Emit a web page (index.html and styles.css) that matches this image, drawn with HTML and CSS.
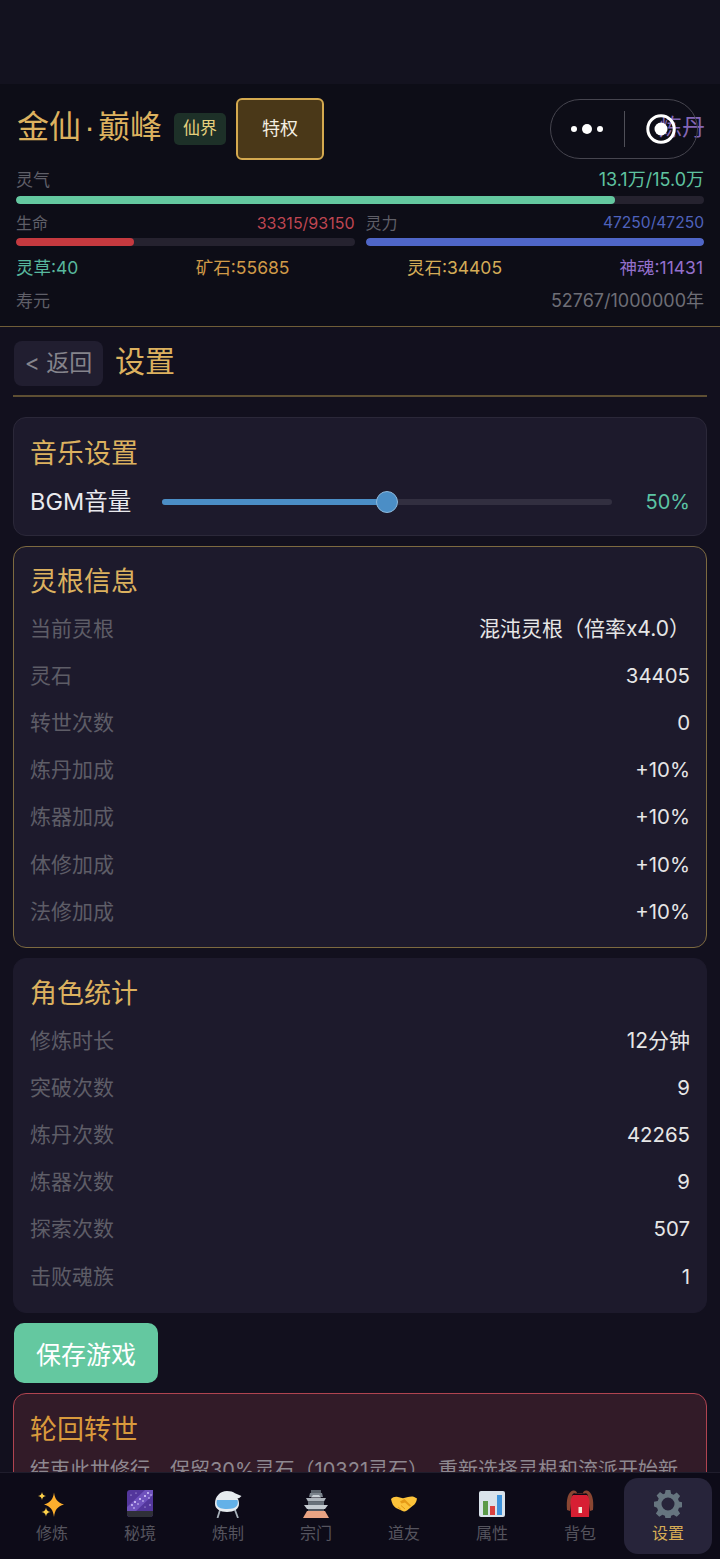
FILE: index.html
```html
<!DOCTYPE html>
<html lang="zh">
<head>
<meta charset="utf-8">
<title>设置</title>
<link rel="stylesheet" href="styles.css">
</head>
<body>
<div class="app">
  <div class="statusbar"></div>
  <header class="hud">
    <div class="hud-title">
      <span class="realm">金仙<span class="realm-dot">·</span>巅峰</span>
      <span class="realm-tag">仙界</span>
      <span class="priv">特权</span>
      <span class="alchemy">炼丹</span>
    </div>
    <div class="capsule">
      <svg class="cap-dots" viewBox="0 0 32 12" width="32" height="12"><circle cx="3" cy="6" r="3" fill="#fff"/><circle cx="16" cy="6" r="5" fill="#fff"/><circle cx="29" cy="6" r="3" fill="#fff"/></svg>
      <span class="cap-sep"></span>
      <svg class="cap-target" viewBox="0 0 30 30" width="30" height="30"><circle cx="15" cy="15" r="13.2" fill="none" stroke="#fff" stroke-width="3"/><circle cx="15" cy="15" r="6.5" fill="#fff"/></svg>
    </div>
    <div class="meter-row lh-qi"><span class="lab">灵气</span><span class="c-green">13.1万/15.0万</span></div>
    <div class="bar bar-qi"><i class="fill f-green w-qi"></i></div>
    <div class="duo">
      <div class="duo-col">
        <div class="meter-row small"><span class="lab">生命</span><span class="c-red">33315/93150</span></div>
        <div class="bar"><i class="fill f-red w-hp"></i></div>
      </div>
      <div class="duo-col">
        <div class="meter-row small"><span class="lab">灵力</span><span class="c-blue">47250/47250</span></div>
        <div class="bar"><i class="fill f-blue w-mp"></i></div>
      </div>
    </div>
    <div class="res">
      <span class="c-green2">灵草:40</span>
      <span class="c-orange">矿石:55685</span>
      <span class="c-gold">灵石:34405</span>
      <span class="c-purple">神魂:11431</span>
    </div>
    <div class="life"><span class="lab">寿元</span><span class="life-v">52767/1000000年</span></div>
  </header>

  <main class="content">
    <div class="page-head">
      <span class="back">&lt; 返回</span>
      <h1 class="page-title">设置</h1>
    </div>

    <section class="card card-music">
      <h2 class="card-title">音乐设置</h2>
      <div class="bgm">
        <span class="bgm-label">BGM音量</span>
        <div class="slider"><i class="slider-fill"></i><i class="slider-thumb"></i></div>
        <span class="bgm-val">50%</span>
      </div>
    </section>

    <section class="card card-root">
      <h2 class="card-title">灵根信息</h2>
      <dl class="rows">
        <div class="row"><dt>当前灵根</dt><dd>混沌灵根（倍率x4.0）</dd></div>
        <div class="row"><dt>灵石</dt><dd class="num">34405</dd></div>
        <div class="row"><dt>转世次数</dt><dd class="num">0</dd></div>
        <div class="row"><dt>炼丹加成</dt><dd class="num">+10%</dd></div>
        <div class="row"><dt>炼器加成</dt><dd class="num">+10%</dd></div>
        <div class="row"><dt>体修加成</dt><dd class="num">+10%</dd></div>
        <div class="row"><dt>法修加成</dt><dd class="num">+10%</dd></div>
      </dl>
    </section>

    <section class="card card-stats">
      <h2 class="card-title">角色统计</h2>
      <dl class="rows">
        <div class="row"><dt>修炼时长</dt><dd>12分钟</dd></div>
        <div class="row"><dt>突破次数</dt><dd class="num">9</dd></div>
        <div class="row"><dt>炼丹次数</dt><dd class="num">42265</dd></div>
        <div class="row"><dt>炼器次数</dt><dd class="num">9</dd></div>
        <div class="row"><dt>探索次数</dt><dd class="num">507</dd></div>
        <div class="row"><dt>击败魂族</dt><dd class="num">1</dd></div>
      </dl>
    </section>

    <button class="save">保存游戏</button>

    <section class="card card-rebirth">
      <h2 class="card-title rebirth-title">轮回转世</h2>
      <p class="rebirth-text">结束此世修行，保留30%灵石（10321灵石），重新选择灵根和流派开始新</p>
    </section>
  </main>

  <nav class="tabs">
    <div class="tab">
      <svg class="ico" viewBox="0 0 28 28"><path d="M16 2.500c1 6.800 3.400 10 10 12-6.600 2-9 5.200-10 12.500-1-7.300-3.400-10.500-10-12.500 6.600-2 9-5.200 10-12z" fill="#fdae2d"/><path d="M4 2c.4 2.500 1.300 3.500 4 4-2.700.5-3.600 1.500-4 4-.4-2.500-1.300-3.500-4-4 2.700-.5 3.600-1.500 4-4zM8 17.500c.4 2.700 1.500 3.900 4.500 4.500-3 .6-4.100 1.800-4.500 4.500-.4-2.700-1.500-3.900-4.500-4.500 3-.6 4.100-1.800 4.500-4.500z" fill="#fcd04a"/></svg>
      <span>修炼</span>
    </div>
    <div class="tab">
      <svg class="ico" viewBox="0 0 28 28"><rect x="1" y="0" width="26" height="27" rx="3" fill="#53369c"/><path d="M1 17 L19 0h8v5L9 22H1z" fill="#6f52bd"/><path d="M1 21h26v3a3 3 0 0 1-3 3H4a3 3 0 0 1-3-3z" fill="#2f3038"/><g fill="#dcd2ff"><circle cx="6" cy="15" r=".9"/><circle cx="9" cy="12" r="1"/><circle cx="12" cy="14" r=".8"/><circle cx="14" cy="9" r="1"/><circle cx="17" cy="11" r=".8"/><circle cx="19" cy="6" r="1"/><circle cx="22" cy="3" r=".9"/><circle cx="23" cy="8" r=".8"/><circle cx="25" cy="5" r=".7"/><circle cx="5" cy="5" r=".6"/><circle cx="10" cy="3" r=".6"/><circle cx="24" cy="15" r=".7"/><circle cx="19" cy="17" r=".6"/><circle cx="8" cy="18" r=".8"/></g></svg>
      <span>秘境</span>
    </div>
    <div class="tab">
      <svg class="ico" viewBox="0 0 28 28"><path d="M6 20 3.500 28M21 20l3 8" stroke="#a7b1ba" stroke-width="1.800" fill="none"/><path d="M13 1c3.500 0 6 .7 8 2.300L27.500 6l-2.500 2.200-1.500-.2c1.200 2 1.500 4 1.500 6 0 5-5 8-12 8S1 19 1 13.500C1 6.500 6 1 13 1z" fill="#e6ebef"/><path d="M3 10h20.500c1 4 .5 9-10.500 9S2 14 3 10z" fill="#63b1e8"/></svg>
      <span>炼制</span>
    </div>
    <div class="tab">
      <svg class="ico" viewBox="0 0 28 28"><path d="M9 0h10v3H9z" fill="#5b636c"/><path d="M8 3h12l1 4H7z" fill="#7c858e"/><path d="M11 5h6l2 2.500H9z" fill="#c9d0d6"/><path d="M4 8h20l-2 3.500H6z" fill="#aeb5bc"/><path d="M6 11.500h16V15H6z" fill="#69727b"/><path d="M2 15h24l-3 4H5z" fill="#c6ccd2"/><path d="M5 21h18l4 7H1z" fill="#e8a383"/><path d="M6 19h16v2H6z" fill="#505760"/></svg>
      <span>宗门</span>
    </div>
    <div class="tab">
      <svg class="ico" viewBox="0 0 28 28"><path d="M1 9c2-2 4-2.500 7-2l5 1.200L18 7c3-1 6-1 9 1.500-.5 3.500-2 6-4.500 7.500l-5.500 4.500c-2 1.300-3.500 1.300-5 .3L6 18C3.500 16.500 1.800 13.500 1 9z" fill="#fcc33a"/><path d="M10 11.500l4.500-2.500 6.500 6.500-1.500 1-4.500-4-3.500 1z" fill="#e59a17"/><path d="M8 17l3 2.500M11 15.500l4 3.500" stroke="#e59a17" stroke-width="1" fill="none"/></svg>
      <span>道友</span>
    </div>
    <div class="tab">
      <svg class="ico" viewBox="0 0 28 28"><rect x="1" y="1" width="26" height="26" rx="2" fill="#d9e3eb"/><rect x="5" y="11" width="5" height="14" fill="#5b9a4a"/><rect x="12" y="16" width="5" height="9" fill="#d9423f"/><rect x="19" y="5" width="5" height="20" fill="#3f94dc"/></svg>
      <span>属性</span>
    </div>
    <div class="tab">
      <svg class="ico bag" viewBox="0 0 28 28"><path d="M1 20C0 9 2 2 7 .5 9.500 0 11 2 11.500 4h5C17 2 18.500 0 21 .5 26 2 28 9 27 20l-3 1-2-15c-.5-2-1.500-3-3-2.500H9C7.500 3 6.500 4 6 6L4 21z" fill="#8a4632"/><path d="M7 5h14c2 2 2.500 4.500 2.500 7.500L23 27H5L4.500 12.500C4.500 9.500 5 7 7 5z" fill="#d71f33"/><rect x="12.500" y="17" width="3.500" height="6" fill="#f5e8d8"/></svg>
      <span>背包</span>
    </div>
    <div class="tab tab-on">
      <svg class="ico gear" viewBox="0 0 28 28"><path fill="#66757f" fill-rule="evenodd" d="M11.600 0h4.800l.7 3.700 2.500 1 3.100-2.100 3.400 3.400-2.100 3.100 1 2.500 3.700.7v4.800l-3.700.7-1 2.500 2.100 3.100-3.400 3.400-3.100-2.100-2.500 1-.7 3.700h-4.800l-.7-3.700-2.500-1-3.100 2.100-3.400-3.400 2.100-3.100-1-2.500L0 16.600v-4.800l3.700-.7 1-2.500L2.600 5.500 6 2.100l3.100 2.100 1.800-.7zM14 7.500a6.500 6.500 0 1 0 0 13 6.500 6.500 0 0 0 0-13z"/></svg>
      <span>设置</span>
    </div>
  </nav>
</div>
</body>
</html>
```
FILE: styles.css
```css
* { box-sizing: border-box; }
html, body { margin: 0; padding: 0; }
body {
  width: 720px; height: 1559px; overflow: hidden;
  background: #12101e;
  font-family: "Inter", "Noto Sans CJK SC", "Noto Sans", sans-serif;
  font-weight: 400;
  color: #e8e8ee;
}
.app { position: relative; width: 720px; height: 1559px; overflow: hidden; display: flex; flex-direction: column; }
.statusbar { height: 84px; background: #13121f; flex: none; }

.hud { position: relative; flex: none; height: 243px; padding: 14px 16px 0 16px; background: #0d0d17; border-bottom: 1px solid #6f5d38; }
.hud-title { display: flex; align-items: center; height: 62px; }
.realm { font-size: 32px; line-height: 1; color: #dcb15f; margin-left: 1px; margin-bottom: 4px; display: flex; align-items: center; }
.realm-dot { font-family: "Liberation Sans", sans-serif; width: 17px; text-align: center; flex: none; }
.realm-tag { margin-left: 12px; width: 52px; height: 32px; line-height: 30px; text-align: center; font-size: 17px; color: #e4cf7c; background: #1d3028; border-radius: 5px; }
.priv { margin-left: 10px; width: 88px; height: 62px; line-height: 58px; text-align: center; font-size: 18px; color: #f4efe2; background: #4a3818; border: 2px solid #d4a94f; border-radius: 6px; }
.alchemy { position: absolute; right: 15px; top: 28px; font-size: 23px; line-height: 30px; color: #8366b6; }

.capsule { position: absolute; left: 550px; top: 15px; width: 148px; height: 60px; border: 1.500px solid #46454f; border-radius: 30px; display: flex; align-items: center; }
.cap-dots { margin-left: 20px; flex: none; }
.cap-sep { margin-left: 21px; width: 1px; height: 36px; background: #4f4f58; flex: none; }
.cap-target { position: absolute; left: 95px; top: 14px; }

.meter-row { display: flex; justify-content: space-between; align-items: center; font-size: 18px; line-height: 24px; }
.lh-qi { margin-top: 8px; height: 24px; }
.lab { color: #5f5f68; font-size: 17px; }
.small .lab { font-size: 16px; }
.bar { height: 8px; border-radius: 4px; background: #25222f; overflow: hidden; }
.bar-qi { margin-top: 4px; }
.fill { display: block; height: 100%; border-radius: 4px; }
.f-green { background: #64c8a0; }
.f-red { background: #c5393f; }
.f-blue { background: #4f66c8; }
.w-qi { width: 87%; }
.w-hp { width: 35%; }
.w-mp { width: 100%; }
.c-green { color: #5fc3a0; }
.c-red { color: #bf4652; font-size: 16px; }
.c-blue { color: #4f62bc; font-size: 15.600px; }
.duo { display: flex; gap: 11px; margin-top: 7px; }
.duo-col { flex: 1 1 0; }
.small { height: 24px; }
.small + .bar { margin-top: 3px; }

.res { display: flex; justify-content: space-between; margin-top: 9px; font-size: 17.500px; line-height: 26px; padding-right: 1px; }
.c-green2 { color: #58b89e; }
.c-orange { color: #d09a48; }
.c-gold { color: #d4ac57; }
.c-purple { color: #9470cc; }
.life { display: flex; justify-content: space-between; align-items: center; margin-top: 7px; line-height: 26px; }
.life-v { color: #6e6e76; font-size: 18px; }

.content { flex: 1 1 auto; overflow: hidden; padding: 14px 13px 0 13px; min-height: 0; }
.page-head { display: flex; align-items: center; height: 56px; padding-bottom: 10px; border-bottom: 2px solid #5e4f33; }
.back { display: block; margin-left: 1px; width: 89px; height: 45px; line-height: 44px; text-align: center; background: #211e30; border-radius: 8px; font-size: 23px; color: #85848c; white-space: nowrap; }
.page-title { margin: 0 0 4px 12px; font-size: 30px; font-weight: 400; color: #dcb15f; line-height: 40px; }

.card { background: #1d1a2c; border-radius: 13px; border: 1px solid #2b2839; padding: 0 16px; }
.card-title { margin: 0; font-size: 27px; line-height: 36px; font-weight: 400; color: #dcb15f; }
.card-music { margin-top: 20px; height: 119px; padding-top: 18px; }
.bgm { display: flex; align-items: center; margin-top: 15px; height: 30px; }
.bgm-label { font-size: 23.500px; color: #e9e9ee; width: 132px; flex: none; white-space: nowrap; line-height: 30px; }
.slider { position: relative; width: 450px; height: 6px; background: #322f40; border-radius: 3px; flex: none; }
.slider-fill { display: block; width: 50%; height: 100%; background: #4b8ec6; border-radius: 3px; }
.slider-thumb { position: absolute; left: 214px; top: -8px; width: 22px; height: 22px; border-radius: 50%; background: #4b8ec6; border: 1px solid #8db9dc; }
.bgm-val { margin-left: auto; font-size: 20px; color: #5cc4a4; line-height: 30px; }

.card-root { margin-top: 10px; height: 402px; padding-top: 17px; border-color: #7d6a40; }
.card-stats { margin-top: 10px; height: 355px; padding-top: 17px; border-color: #1d1a2c; }
.rows { margin: 4.700px 0 0; }
.row { display: flex; justify-content: space-between; height: 47.200px; line-height: 47.200px; }
.row dt { font-size: 21px; color: #5e5d67; }
.row dd { margin: 0; font-size: 21px; color: #e6e6e6; }
.row dd.num { font-size: 20.400px; }

.save { display: block; margin-top: 10px; margin-left: 1px; width: 144px; height: 60px; border: 0; border-radius: 10px; background: #64c8a0; color: #fff; font-family: inherit; font-size: 25px; font-weight: 400; padding: 0; }

.card-rebirth { margin-top: 10px; height: 200px; padding-top: 18px; background: #321b28; border: 1.500px solid #b04450; }
.rebirth-title { color: #d99a3c; }
.rebirth-text { margin: 7px 0 0; font-size: 20px; line-height: 30px; color: #8e8890; white-space: nowrap; }

.tabs { position: absolute; left: 0; bottom: 0; width: 720px; height: 87px; background: #0d0b18; border-top: 1px solid #1f1d2c; display: flex; padding: 5px 8px 5px 8px; }
.tab { flex: 1 1 0; display: flex; flex-direction: column; align-items: center; padding-top: 12px; font-size: 16px; line-height: 24px; color: #55545e; border-radius: 14px; }
.ico { width: 28px; height: 28px; display: block; margin-bottom: 3px; flex: none; }
.tab-on { background: #27243a; color: #d8ad55; }
```
